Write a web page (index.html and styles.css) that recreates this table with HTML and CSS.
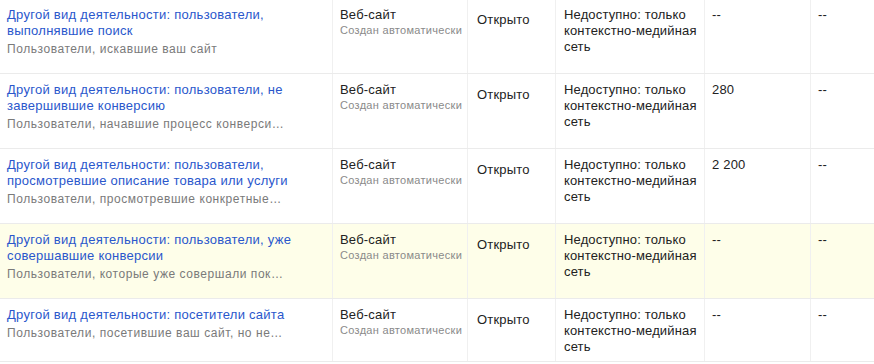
FILE: index.html
```html
<!DOCTYPE html>
<html lang="ru">
<head>
<meta charset="utf-8">
<link rel="stylesheet" href="styles.css">
</head>
<body>
<div class="table">
  <div class="row">
    <div class="cell c1"><a class="title">Другой вид деятельности: пользователи, выполнявшие поиск</a><div class="desc">Пользователи, искавшие ваш сайт</div></div>
    <div class="cell c2"><div class="type">Веб-сайт</div><div class="sub">Создан автоматически</div></div>
    <div class="cell c3">Открыто</div>
    <div class="cell c4">Недоступно: только контекстно-медийная сеть</div>
    <div class="cell c5">--</div>
    <div class="cell c6">--</div>
  </div>
  <div class="row">
    <div class="cell c1"><a class="title">Другой вид деятельности: пользователи, не завершившие конверсию</a><div class="desc">Пользователи, начавшие процесс конверси…</div></div>
    <div class="cell c2"><div class="type">Веб-сайт</div><div class="sub">Создан автоматически</div></div>
    <div class="cell c3">Открыто</div>
    <div class="cell c4">Недоступно: только контекстно-медийная сеть</div>
    <div class="cell c5">280</div>
    <div class="cell c6">--</div>
  </div>
  <div class="row">
    <div class="cell c1"><a class="title">Другой вид деятельности: пользователи, просмотревшие описание товара или услуги</a><div class="desc">Пользователи, просмотревшие конкретные…</div></div>
    <div class="cell c2"><div class="type">Веб-сайт</div><div class="sub">Создан автоматически</div></div>
    <div class="cell c3">Открыто</div>
    <div class="cell c4">Недоступно: только контекстно-медийная сеть</div>
    <div class="cell c5">2 200</div>
    <div class="cell c6">--</div>
  </div>
  <div class="row hover">
    <div class="cell c1"><a class="title">Другой вид деятельности: пользователи, уже совершавшие конверсии</a><div class="desc">Пользователи, которые уже совершали пок…</div></div>
    <div class="cell c2"><div class="type">Веб-сайт</div><div class="sub">Создан автоматически</div></div>
    <div class="cell c3">Открыто</div>
    <div class="cell c4">Недоступно: только контекстно-медийная сеть</div>
    <div class="cell c5">--</div>
    <div class="cell c6">--</div>
  </div>
  <div class="row last">
    <div class="cell c1"><a class="title">Другой вид деятельности: посетители сайта</a><div class="desc">Пользователи, посетившие ваш сайт, но не…</div></div>
    <div class="cell c2"><div class="type">Веб-сайт</div><div class="sub">Создан автоматически</div></div>
    <div class="cell c3">Открыто</div>
    <div class="cell c4">Недоступно: только контекстно-медийная сеть</div>
    <div class="cell c5">--</div>
    <div class="cell c6">--</div>
  </div>
</div>
</body>
</html>
```

FILE: styles.css
```css
html, body {
  margin: 0;
  padding: 0;
  background: #fff;
}
body {
  font-family: Arial, "Liberation Sans", sans-serif;
  font-size: 13px;
  line-height: 16px;
  color: #222;
  width: 874px;
  overflow: hidden;
}
.table {
  margin-top: -1px;
}
.row {
  display: grid;
  grid-template-columns: 333px 135px 88px 149px 106px 1fr;
  height: 75px;
  border-bottom: 1px solid #ebebeb;
  box-sizing: border-box;
  background: #fff;
}
.row.hover {
  background: #fefee9;
}
.row.last {
  height: 63px;
}
.cell {
  box-sizing: border-box;
  border-right: 1px solid #f0f0f0;
  padding: 8px 7px 0 7px;
  overflow: hidden;
  letter-spacing: 0.2px;
}
.cell.c6 {
  border-right: none;
}
.title {
  display: block;
  color: #2a57cc;
  text-decoration: none;
  padding-right: 24px;
  letter-spacing: 0.27px;
}
.desc {
  margin-top: 2px;
  font-size: 12px;
  color: #7a7a7a;
  white-space: nowrap;
  letter-spacing: 0.55px;
}
.type {
  color: #222;
}
.sub {
  font-size: 11px;
  line-height: 14px;
  color: #8a8a8a;
  white-space: nowrap;
  letter-spacing: 0.3px;
}
.c3 {
  padding-top: 13px;
  padding-left: 9px;
}
.c4 {
  padding-left: 8px;
  padding-right: 0;
  letter-spacing: 0.15px;
}
```
